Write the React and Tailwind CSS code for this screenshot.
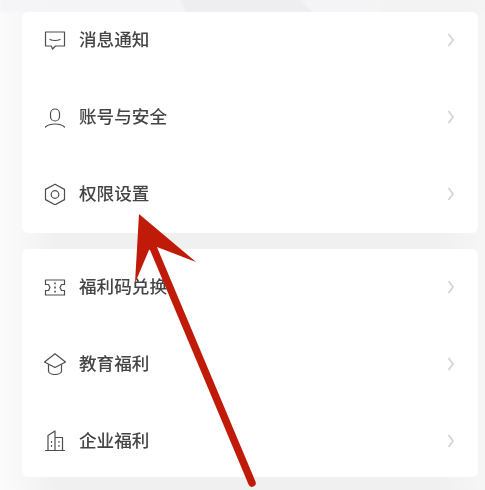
import React from "react";

const cjk = "font-['Noto_Sans_CJK_SC','Noto_Sans',sans-serif]";

const MessageIcon = () => (
  <svg width="22" height="22" viewBox="0 0 22 22" fill="none" stroke="#4d4d4d" strokeWidth="1.2">
    <path d="M1.500 3h19v14H11.500l-3 3-1.200-3H1.500z" strokeLinejoin="round" />
    <path d="M6 10.500c2.500 1.300 7.500 1.300 10 0" strokeLinecap="round" />
  </svg>
);

const UserIcon = () => (
  <svg width="22" height="22" viewBox="0 0 22 22" fill="none" stroke="#4d4d4d" strokeWidth="1.2">
    <rect x="6.500" y="3" width="9" height="12" rx="4.500" />
    <path d="M1.500 21c2.500-2.400 5.800-3 9.500-3s7 .6 9.500 3" strokeLinecap="round" />
  </svg>
);

const HexIcon = () => (
  <svg width="22" height="22" viewBox="0 0 22 22" fill="none" stroke="#4d4d4d" strokeWidth="1.2">
    <path d="M11 1.200l9.500 5.200v10.200L11 21.800l-9.500-5.200V6.400z" strokeLinejoin="round" />
    <circle cx="11" cy="11.500" r="3.800" />
  </svg>
);

const TicketIcon = () => (
  <svg width="22" height="22" viewBox="0 0 22 22" fill="none" stroke="#4d4d4d" strokeWidth="1.2">
    <path d="M1.500 4h19v4.500h-3l-1.500 3 1.500 3h3V19h-19v-4.500h3l1.500-3-1.500-3h-3z" strokeLinejoin="round" />
    <path d="M11 6.500v1.800M11 10.600v1.800M11 14.700v1.800" strokeWidth="1.600" />
  </svg>
);

const CapIcon = () => (
  <svg width="22" height="22" viewBox="0 0 22 22" fill="none" stroke="#4d4d4d" strokeWidth="1.2">
    <path d="M11 .8L21.500 9 11 14.500.5 9z" strokeLinejoin="round" />
    <path d="M4.500 11.500v6.500c0 2 3 3.500 6.500 3.500s6.500-1.500 6.500-3.500v-6.500" />
  </svg>
);

const BuildingIcon = () => (
  <svg width="22" height="22" viewBox="0 0 22 22" fill="none" stroke="#4d4d4d" strokeWidth="1.2">
    <path d="M1.500 20.500h19" strokeLinecap="round" />
    <path d="M4 20.500V5.500L11 1v19.500M11 7.500l7.500 0v13" strokeLinejoin="round" />
    <path d="M7.500 11v1.800M7.500 15v1.800M15 11v1.800M15 15v1.800" />
  </svg>
);

const Chevron = () => (
  <svg width="8" height="14" viewBox="0 0 8 14" fill="none" stroke="#d6d6d6" strokeWidth="2">
    <path d="M1.500 1l4.500 6-4.500 6" strokeLinejoin="round" />
  </svg>
);

const Row = ({ icon, label }) => (
  <div className="flex h-6 items-center">
    <div className="flex w-[35px] shrink-0 justify-start">{icon}</div>
    <span className={`mb-[2px] flex-1 text-[17.600px] font-medium leading-6 text-[#454545] ${cjk}`}>{label}</span>
    <Chevron />
  </div>
);

const App = () => {
  return (
    <div className="relative h-[490px] w-[485px] overflow-hidden bg-[linear-gradient(90deg,#fbfbfb_0%,#f8f8f8_4%,#f0f0f0_12%,#f0f0f0_90%,#f6f6f6_100%)]">
      {/* faint shapes behind the first card */}
      <svg className="absolute left-0 top-0 blur-[1px]" width="485" height="12" viewBox="0 0 485 12">
        <rect width="485" height="12" fill="#f5f5f7" />
        <path d="M180 0H300L312 12H186z" fill="#eeeef1" />
        <path d="M380 0L382 12H485V0z" fill="#f3f3f4" />
      </svg>

      <div className="relative flex flex-col gap-4 pl-[22px] pr-[7px] pt-3 blur-[0.4px]">
        <div className="flex flex-col gap-[53px] rounded-md bg-white pb-[27px] pl-[22px] pr-[23px] pt-4">
          <Row icon={<MessageIcon />} label="消息通知" />
          <Row icon={<UserIcon />} label="账号与安全" />
          <Row icon={<HexIcon />} label="权限设置" />
        </div>
        <div className="flex flex-col gap-[53px] rounded-md bg-white pb-6 pl-[22px] pr-[23px] pt-[26px]">
          <Row icon={<TicketIcon />} label="福利码兑换" />
          <Row icon={<CapIcon />} label="教育福利" />
          <Row icon={<BuildingIcon />} label="企业福利" />
        </div>
      </div>

      {/* red annotation arrow */}
      <svg className="absolute left-0 top-0" width="485" height="490" viewBox="0 0 485 490">
        <path d="M152 245L252 483" stroke="#c01b09" strokeWidth="7.500" strokeLinecap="round" />
        <path d="M139 214L196 262L157 247L149 250L135 283z" fill="#c01b09" />
      </svg>
    </div>
  );
};

export default App;
